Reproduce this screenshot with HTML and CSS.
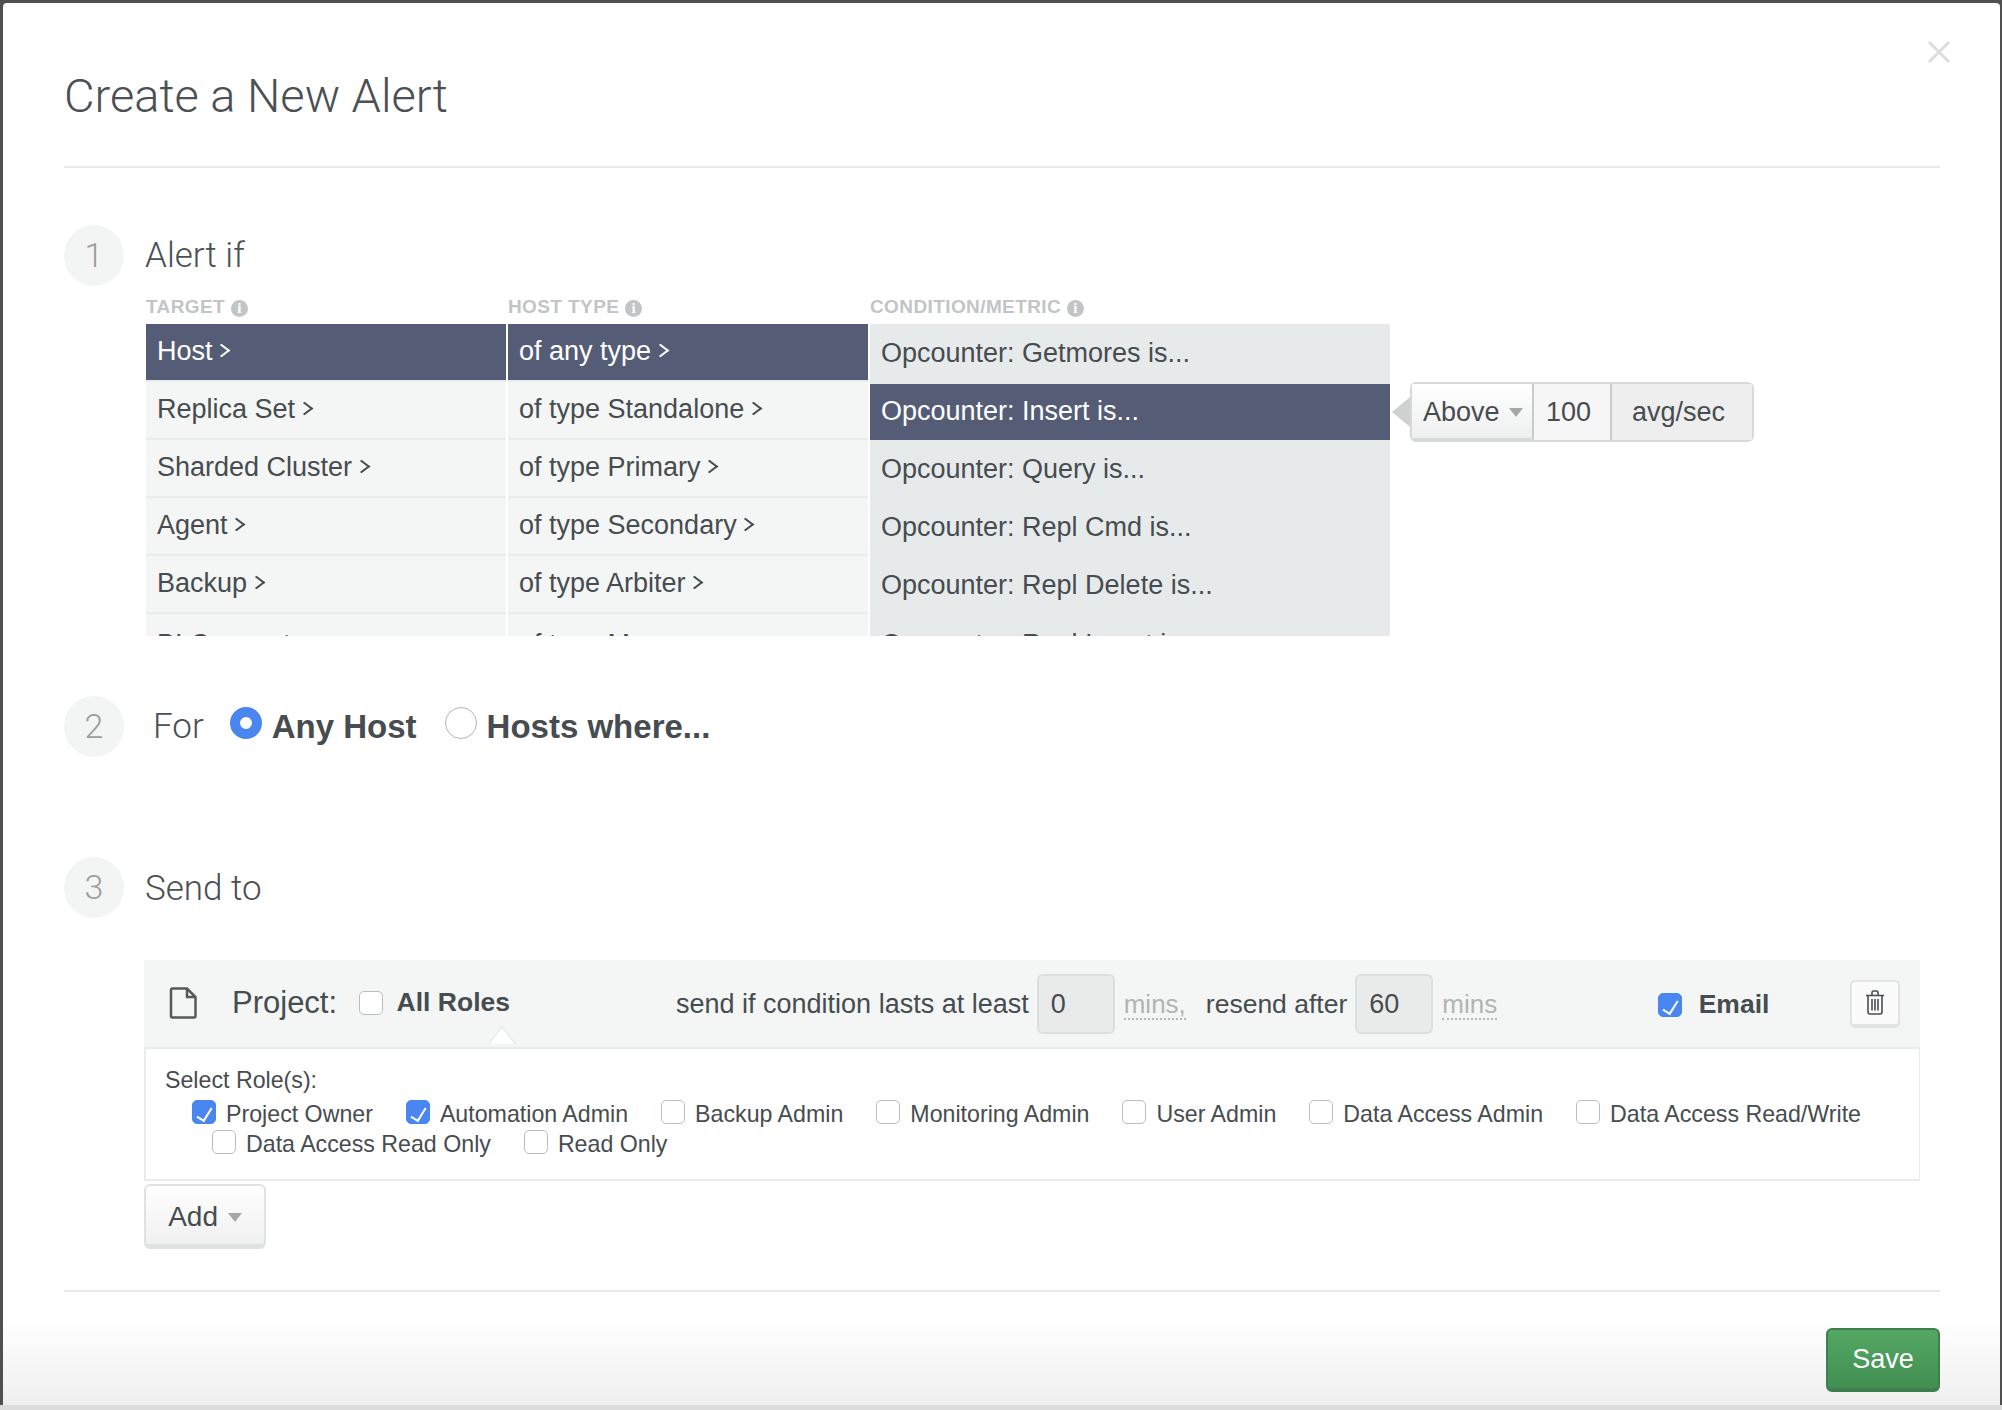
FILE: index.html
```html
<!DOCTYPE html>
<html>
<head>
    <meta charset="utf-8">
    <title>Create a New Alert</title>
    <link rel="stylesheet" href="styles.css">
</head>
<body>
    <div class="modal">
        <button type="button" class="close" aria-label="Close">
            <svg width="24" height="24" viewBox="0 0 24 24"><path d="M2 2 L22 22 M22 2 L2 22" /></svg>
        </button>

        <div class="modal-header">
            <h1>Create a New Alert</h1>
        </div>

        <!-- Step 1 -->
        <div class="step step-one">
            <span class="step-num">1</span>
            <span class="step-title">Alert if</span>
        </div>
        <div class="alert-if">
            <div class="picker">
                <div class="col-label">TARGET <span class="info">i</span></div>
                <div class="col-label">HOST TYPE <span class="info">i</span></div>
                <div class="col-label">CONDITION/METRIC <span class="info">i</span></div>

                <ul class="list">
                    <li class="active">Host <span class="chev"></span></li>
                    <li>Replica Set <span class="chev"></span></li>
                    <li>Sharded Cluster <span class="chev"></span></li>
                    <li>Agent <span class="chev"></span></li>
                    <li>Backup <span class="chev"></span></li>
                    <li>BI Connector <span class="chev"></span></li>
                </ul>
                <ul class="list">
                    <li class="active">of any type <span class="chev"></span></li>
                    <li>of type Standalone <span class="chev"></span></li>
                    <li>of type Primary <span class="chev"></span></li>
                    <li>of type Secondary <span class="chev"></span></li>
                    <li>of type Arbiter <span class="chev"></span></li>
                    <li>of type Mongos <span class="chev"></span></li>
                </ul>
                <ul class="list metric">
                    <li>Opcounter: Getmores is...</li>
                    <li class="active">Opcounter: Insert is...</li>
                    <li>Opcounter: Query is...</li>
                    <li>Opcounter: Repl Cmd is...</li>
                    <li>Opcounter: Repl Delete is...</li>
                    <li>Opcounter: Repl Insert is...</li>
                </ul>
            </div>

            <div class="threshold">
                <div class="threshold-op">Above <span class="caret"></span></div>
                <div class="threshold-val">100</div>
                <div class="threshold-unit">avg/sec</div>
            </div>
        </div>

        <!-- Step 2 -->
        <div class="step step-two">
            <span class="step-num">2</span>
            <span class="step-title for">For</span>
            <label class="radio-opt"><input type="radio" name="scope" checked>Any Host</label>
            <label class="radio-opt second"><input type="radio" name="scope">Hosts where...</label>
        </div>

        <!-- Step 3 -->
        <div class="step step-three">
            <span class="step-num">3</span>
            <span class="step-title">Send to</span>
        </div>

        <div class="notify">
            <div class="notify-head">
                <svg class="file-icon" width="28" height="32" viewBox="0 0 28 32">
                    <path d="M2 3 Q2 1.500 3.500 1.500 L18 1.500 L26.500 10 L26.500 29 Q26.500 30.500 25 30.500 L3.500 30.500 Q2 30.500 2 29 Z M18 1.500 L18 10 L26.500 10" />
                </svg>
                <span class="project">Project:</span>
                <input type="checkbox" class="all-roles">
                <b class="all-roles-label">All Roles</b>
                <span class="send-if">send if condition lasts at least</span>
                <input type="text" class="mins" value="0">
                <span class="unit">mins,</span>
                <span class="resend">resend after</span>
                <input type="text" class="mins" value="60">
                <span class="unit">mins</span>
                <input type="checkbox" class="email" checked>
                <b class="email-label">Email</b>
                <button type="button" class="trash" aria-label="Delete">
                    <svg width="20" height="25" viewBox="0 0 20 25">
                        <path d="M1 5.500 H19 M7 5 V2.500 Q7 1 8.500 1 H11.500 Q13 1 13 2.500 V5 M3 5.500 V22 Q3 24 5 24 H15 Q17 24 17 22 V5.500 M7 9 V20.500 M10 9 V20.500 M13 9 V20.500" />
                    </svg>
                </button>
            </div>
            <div class="notify-body">
                <div class="select-label">Select Role(s):</div>
                <div class="roles">
                    <label><input type="checkbox" checked>Project Owner</label>
                    <label><input type="checkbox" checked>Automation Admin</label>
                    <label><input type="checkbox">Backup Admin</label>
                    <label><input type="checkbox">Monitoring Admin</label>
                    <label><input type="checkbox">User Admin</label>
                    <label><input type="checkbox">Data Access Admin</label>
                    <label><input type="checkbox">Data Access Read/Write</label>
                </div>
                <div class="roles roles-second">
                    <label><input type="checkbox">Data Access Read Only</label>
                    <label><input type="checkbox">Read Only</label>
                </div>
            </div>
        </div>
        <button type="button" class="add-btn">Add <span class="caret"></span></button>

        <div class="modal-footer">
            <button type="button" class="save-btn">Save</button>
        </div>
    </div>
    <div class="bottom-edge"></div>
</body>
</html>
```

FILE: styles.css
```css
* {
    box-sizing: border-box;
}

html,
body {
    margin: 0;
    height: 1410px;
    overflow: hidden;
}

body {
    padding: 3px 2px 0 3px;
    background-color: #505050;
    font-family: "Liberation Sans", Arial, sans-serif;
    color: #464c4f;
}

.modal {
    position: relative;
    height: 1402px;
    padding: 0 60px 0 61px;
    border-radius: 4px 4px 0 0;
    background: linear-gradient(to bottom, #fff 1315px, #efefef 1402px);
}

.bottom-edge {
    height: 5px;
    margin: 0 -2px 0 -3px;
    background-color: #dcdcdc;
}

.close {
    position: absolute;
    top: 37px;
    right: 49px;
    padding: 0;
    border: 0;
    background: none;
    line-height: 0;
}

.close path {
    fill: none;
    stroke: #dcdcdc;
    stroke-width: 3;
}

.modal-header {
    height: 165px;
    padding-top: 67px;
    border-bottom: 2px solid #e8e8e8;
}

h1 {
    margin: 0;
    font-family: Roboto, "Liberation Sans", sans-serif;
    font-size: 47px;
    font-weight: 300;
    line-height: 52px;
    color: #4a5053;
}

/* numbered steps */
.step {
    display: flex;
    align-items: center;
    height: 61px;
}

.step-one {
    margin-top: 57px;
}

.step-two {
    margin-top: 60px;
}

.step-three {
    margin-top: 100px;
}

.step-num {
    width: 60px;
    height: 61px;
    margin-right: 21px;
    border-radius: 50%;
    background-color: #f3f5f4;
    font-family: Roboto, "Liberation Sans", sans-serif;
    font-size: 34px;
    font-weight: 300;
    line-height: 61px;
    text-align: center;
    color: #9a9e9f;
}

.step-title {
    font-family: Roboto, "Liberation Sans", sans-serif;
    font-size: 35px;
    font-weight: 300;
    color: #4a5053;
}

.step-title.for {
    margin-left: 8px;
}

.step-three .step-title {
    margin-top: 2px;
}

/* step 1 */
.alert-if {
    display: flex;
    align-items: flex-start;
    margin-left: 82px;
}

.picker {
    display: grid;
    grid-template-columns: 360px 360px 520px;
    column-gap: 2px;
    margin-top: 10px;
}

.col-label {
    height: 28px;
    font-size: 19px;
    font-weight: 700;
    letter-spacing: 0.4px;
    line-height: 22px;
    color: #c1c5c5;
}

.info {
    display: inline-block;
    width: 17px;
    height: 17px;
    border-radius: 50%;
    background-color: #c1c5c5;
    font-family: "Liberation Serif", serif;
    font-size: 15px;
    letter-spacing: 0;
    line-height: 17px;
    text-align: center;
    color: #fff;
}

.list {
    height: 312px;
    margin: 0;
    padding: 0;
    overflow: hidden;
    list-style-type: none;
    background-color: #f4f6f5;
}

.list li {
    height: 58px;
    padding-left: 11px;
    border-bottom: 2px solid #e9ecec;
    font-size: 27px;
    line-height: 54px;
}

/* the last row is cut by the list, only the tall letters show */
.list li:last-child {
    padding-top: 3px;
}

.list li.active {
    border-bottom-color: #e9ecec;
    background-color: #555d76;
    color: #fff;
}

.metric {
    padding-top: 2px;
    background-color: #e7eaeb;
}

.metric li,
.metric li.active {
    border-bottom-color: #e7eaeb;
}

.metric li:last-child {
    padding-top: 1px;
}

.chev {
    display: inline-block;
    width: 11px;
    height: 11px;
    margin-left: -4px;
    border-top: 2px solid currentColor;
    border-right: 2px solid currentColor;
    transform: rotate(45deg) skew(-8deg, -8deg);
    vertical-align: 4px;
}

.threshold {
    position: relative;
    display: flex;
    height: 60px;
    margin-top: 96px;
    margin-left: 20px;
    border: 2px solid #d6d9d9;
    border-radius: 6px;
    font-size: 27px;
    line-height: 56px;
}

.threshold::before {
    content: "";
    position: absolute;
    top: 13px;
    left: -20px;
    border-top: 15px solid transparent;
    border-bottom: 15px solid transparent;
    border-right: 18px solid #cfd1d1;
}

.threshold-op {
    width: 122px;
    padding-left: 11px;
    border-right: 2px solid #c8cbcb;
    border-bottom: 2px solid #d6d9d9;
    background: linear-gradient(to bottom, #fff, #eeefef);
}

.threshold-val {
    width: 78px;
    padding-left: 12px;
    border-right: 2px solid #c8cbcb;
    background-color: #f6f6f6;
}

.threshold-unit {
    width: 140px;
    padding-left: 20px;
    background-color: #eeeeee;
}

.caret {
    display: inline-block;
    margin-left: 2px;
    border-top: 9px solid #a6a8a8;
    border-left: 7px solid transparent;
    border-right: 7px solid transparent;
    vertical-align: 4px;
}

/* step 2 */
.radio-opt {
    display: flex;
    align-items: center;
    margin-left: 26px;
    font-size: 33px;
    font-weight: 700;
}

.radio-opt.second {
    margin-left: 28px;
}

.radio-opt input {
    appearance: none;
    width: 32px;
    height: 32px;
    margin: -8px 10px 0 0;
    border: 1px solid #b5b5b5;
    border-radius: 50%;
    background-color: #fff;
}

.radio-opt input:checked {
    border: 10px solid #4a86f0;
}

/* step 3 */
.notify {
    width: 1776px;
    margin-top: 42px;
    margin-left: 80px;
}

.notify-head {
    display: flex;
    align-items: center;
    height: 89px;
    padding-left: 25px;
    border-bottom: 2px solid #e9ecec;
    background-color: #f4f6f5;
    font-size: 27px;
}

.notify-head::after {
    content: "";
    position: absolute;
    top: 1029px;
    left: 487px;
    width: 22px;
    height: 22px;
    border-top: 2px solid #e9ecec;
    border-left: 2px solid #e9ecec;
    background-color: #fff;
    transform: rotate(45deg) skew(8deg, 8deg);
    clip-path: polygon(0 0, 100% 0, 0 100%);
}

.file-icon {
    margin-top: -2px;
}

.file-icon path {
    fill: none;
    stroke: #54595c;
    stroke-width: 2.500;
}

.project {
    margin-left: 35px;
    font-size: 31px;
    margin-top: -2px;
}

input[type="checkbox"] {
    position: relative;
    flex: none;
    appearance: none;
    width: 24px;
    height: 24px;
    margin: 0 10px 0 0;
    border: 1px solid #bdbdbd;
    border-radius: 5px;
    background-color: #fff;
}

input[type="checkbox"]:checked {
    border-color: #4a86f0;
    background-color: #4a86f0;
}

input[type="checkbox"]:checked::after {
    content: "";
    position: absolute;
    top: 4px;
    left: 7px;
    width: 7px;
    height: 14px;
    border-right: 2px solid #fff;
    border-bottom: 2px solid #fff;
    transform: rotate(32deg);
}

.notify-head .all-roles {
    margin: -2px 0 0 22px;
}

.all-roles-label {
    margin: -2px 0 0 13.500px;
    font-size: 26.500px;
}

.send-if {
    margin: 2px 0 0 166px;
}

.mins {
    width: 78px;
    height: 60px;
    margin-left: 8px;
    padding: 2px 0 0 12px;
    border: 2px solid #dcdfdf;
    border-radius: 6px;
    background-color: #e9ebeb;
    font-family: inherit;
    font-size: 27px;
    color: #464c4f;
}

.unit {
    margin: 2px 0 0 9px;
    border-bottom: 2px dotted #b4b8b8;
    font-size: 26px;
    line-height: 28px;
    color: #b0b4b4;
}

.resend {
    margin: 2px 0 0 20px;
    font-size: 26.500px;
}

.notify-head .email {
    margin: 2px 0 0 161px;
}

.email-label {
    margin: 2px 0 0 16.500px;
    font-size: 26.500px;
}

.trash {
    width: 50px;
    height: 48px;
    margin-left: 81px;
    padding: 0;
    border: 2px solid #e2e4e4;
    border-bottom-width: 4px;
    border-radius: 5px;
    background-color: #fbfbfb;
    line-height: 0;
}

.trash path {
    fill: none;
    stroke: #4a4f52;
    stroke-width: 1.600;
}

.notify-body {
    height: 132px;
    padding: 16px 0 0 19px;
    border-left: 2px solid #e9ecec;
    border-right: 1px solid #e9ecec;
    border-bottom: 2px solid #e9ecec;
    font-size: 23.200px;
    line-height: 30px;
}

.select-label {
    margin-bottom: 4px;
}

.roles {
    display: flex;
    column-gap: 33px;
    padding-left: 27px;
}

.roles-second {
    padding-left: 47px;
}

.roles label {
    display: flex;
    align-items: center;
}

.roles input[type="checkbox"] {
    margin-top: -4px;
}

.add-btn {
    display: block;
    width: 122px;
    height: 65px;
    margin: 3px 0 0 80px;
    padding: 4px 0 0;
    border: 2px solid #dfe2e2;
    border-bottom-width: 5px;
    border-radius: 6px;
    background: linear-gradient(to bottom, #fff, #f0f0f0);
    font-family: inherit;
    font-size: 28px;
    color: #464c4f;
}

.modal-footer {
    display: flex;
    justify-content: flex-end;
    margin-top: 41px;
    padding-top: 36px;
    border-top: 2px solid #e8e8e8;
}

.save-btn {
    width: 114px;
    height: 64px;
    padding: 0;
    border: 2px solid #3f7f4e;
    border-bottom-width: 4px;
    border-radius: 6px;
    background: linear-gradient(to bottom, #53a862, #418f52);
    font-family: inherit;
    font-size: 27px;
    color: #fff;
}
```
